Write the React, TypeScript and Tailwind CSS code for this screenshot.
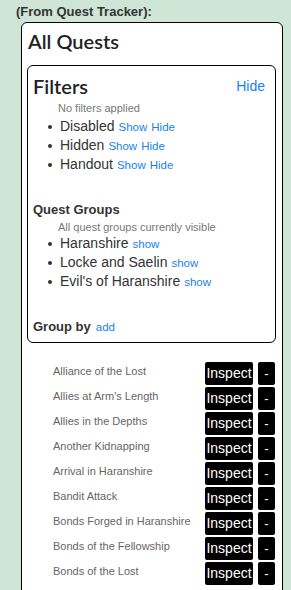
const filters = ["Disabled", "Hidden", "Handout"];
const groups = ["Haranshire", "Locke and Saelin", "Evil's of Haranshire"];
const quests = [
   "Alliance of the Lost",
   "Allies at Arm's Length",
   "Allies in the Depths",
   "Another Kidnapping",
   "Arrival in Haranshire",
   "Bandit Attack",
   "Bonds Forged in Haranshire",
   "Bonds of the Fellowship",
   "Bonds of the Lost",
];

function Bullet({ children }: { children: React.ReactNode }) {
   return (
      <div className="flex h-[19px] items-center">
         <div className="ml-[20px] mr-[8px] h-[4px] w-[4px] rounded-full bg-[#333]"></div>
         <div className="flex items-baseline gap-[4px]">{children}</div>
      </div>
   );
}

export default function App() {
   return (
      <div className="h-[590px] overflow-hidden bg-[#cfe6d7] font-['Liberation_Sans',Arial,sans-serif] text-[#222]">
         <div className="h-[22px] pl-[16px] pt-[4px] text-[13px] font-bold leading-[15px] text-[#333]">
            (From Quest Tracker):
         </div>

         <div className="ml-[21px] w-[262px] rounded-[6px] border border-black bg-white pb-[40px]">
            <div className="mt-[6px] pl-[6px] font-['Lato',sans-serif] text-[20px] font-semibold leading-[24px] text-[#222]">
               All Quests
            </div>

            <div className="ml-[5px] mt-[12px] w-[249px] rounded-[6px] border border-black pb-[6px]">
               <div className="flex items-center justify-between pl-[5px] pr-[10px] pt-[8px]">
                  <div className="font-['Lato',sans-serif] text-[20px] font-semibold leading-[24px]">Filters</div>
                  <div className="text-[14px] leading-[24px] text-[#1a7ff0]">Hide</div>
               </div>
               <div className="mb-[2px] mt-[3px] pl-[30px] text-[11px] leading-[14px] text-[#777]">No filters applied</div>
               {filters.map((f) => (
                  <Bullet key={f}>
                     <span className="text-[14px] text-[#333]">{f}</span>
                     <span className="text-[11.5px] text-[#1a7ff0]">Show</span>
                     <span className="text-[11.5px] text-[#1a7ff0]">Hide</span>
                  </Bullet>
               ))}

               <div className="mt-[27px] pl-[5px] text-[13px] font-bold leading-[18px] text-[#333]">Quest Groups</div>
               <div className="mt-[1px] pl-[30px] text-[11px] leading-[14px] text-[#777]">
                  All quest groups currently visible
               </div>
               {groups.map((g) => (
                  <Bullet key={g}>
                     <span className="text-[14px] text-[#333]">{g}</span>
                     <span className="text-[11.5px] text-[#1a7ff0]">show</span>
                  </Bullet>
               ))}

               <div className="mt-[27px] flex items-baseline gap-[5px] pl-[5px] leading-[18px]">
                  <span className="text-[13px] font-bold text-[#333]">Group by</span>
                  <span className="text-[11.5px] text-[#1a7ff0]">add</span>
               </div>
            </div>

            <div className="mt-[19px] flex flex-col gap-[2px]">
               {quests.map((q) => (
                  <div key={q} className="flex h-[23px] items-start">
                     <div className="w-[183px] truncate pl-[31px] pt-[2px] text-[11px] leading-[14px] text-[#666]">{q}</div>
                     <button className="h-[23px] w-[48px] rounded-[2px] bg-black text-[14px] leading-[23px] text-white">
                        Inspect
                     </button>
                     <button className="ml-[5px] h-[23px] w-[17px] rounded-[2px] bg-black text-[13px] leading-[23px] text-white">
                        -
                     </button>
                  </div>
               ))}
            </div>
         </div>
      </div>
   );
}
